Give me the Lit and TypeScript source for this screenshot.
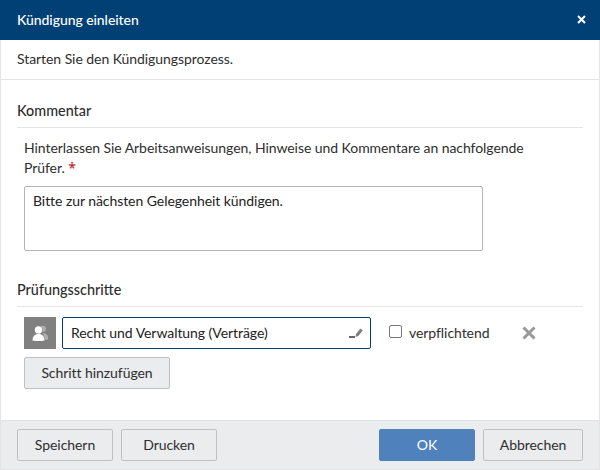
import { LitElement, html, css } from "lit";
import { customElement } from "lit/decorators.js";

@customElement("app-root")
export class AppRoot extends LitElement {
  static styles = css`
    :host { display: block; width: 600px; height: 470px; font-family: "Lato", sans-serif; font-size: 14px; letter-spacing: -0.06px; color: #2e2e2e; background: #fff; overflow: hidden; }
    * { box-sizing: border-box; }
    .dialog { width: 600px; height: 470px; display: flex; flex-direction: column; border-left: 1px solid #e4e4e4; border-right: 1px solid #e4e4e4; border-bottom: 1px solid #e4e4e4; }
    .head { height: 40px; margin: 0 -1px; background: #004074; color: #fff; display: flex; align-items: center; justify-content: space-between; padding: 0 14px 1px 17px; font-weight: 500; flex: none; }
    .close { width: 9px; height: 9px; display: block; }
    .intro { height: 40px; display: flex; align-items: center; padding: 0 16px 2px; border-bottom: 1px solid #e4e4e4; flex: none; }
    .body { flex: 1; padding: 0 16px; display: flex; flex-direction: column; }
    .section { height: 30px; margin-top: 18px; font-weight: 500; font-size: 14.4px; letter-spacing: 0; border-bottom: 1px solid #e4e4e4; display: flex; align-items: center; padding-bottom: 4px; }
    .hint { margin: 10px 7px 0; line-height: 20px; width: 510px; }
    .req { color: #c0272d; font-family: "Noto Sans", sans-serif; font-weight: 500; line-height: 1; }
    .ta { margin: 8px 0 0 7px; width: 459px; height: 65px; border: 1px solid #b4b4b4; border-radius: 2px; padding: 5px 8px; line-height: 18px; color: #222; }
    .section.two { margin-top: 26px; }
    .row { display: flex; align-items: center; margin: 10px 0 0 7px; height: 32px; }
    .avatar { width: 32px; height: 32px; background: #808080; display: flex; align-items: center; justify-content: center; flex: none; }
    .input { width: 309px; height: 32px; margin-left: 6px; border: 1px solid #004074; border-radius: 2px; display: flex; align-items: center; justify-content: space-between; padding: 0 7px 0 8px; color: #222; }
    .input span { padding-bottom: 2px; }
    .check { width: 13px; height: 13px; border: 1px solid #777; border-radius: 2px; margin: 0 0 4px 18px; flex: none; }
    .label { margin-left: 7px; padding-bottom: 1px; }
    .x { margin-left: 33px; width: 14px; height: 14px; display: block; }
    .btn { height: 32px; display: flex; align-items: center; justify-content: center; padding-bottom: 2px; background: #ebecee; border: 1px solid #c0c0c0; border-radius: 2px; flex: none; }
    .add { width: 146px; margin: 8px 0 0 7px; }
    .foot { height: 49px; background: #ebecee; border-top: 1px solid #e0e0e0; flex: none; display: flex; align-items: center; padding: 0 16px; gap: 8px; }
    .w96 { width: 96px; }
    .ok { width: 96px; margin-left: auto; background: #4f81bd; border-color: #4f81bd; color: #fff; }
    .cancel { width: 100px; }
  `;
  render() {
    return html`<div class="dialog">
      <div class="head"><span>Kündigung einleiten</span>
        <svg class="close" viewBox="0 0 9 9"><path d="M1 1l7 7M8 1l-7 7" stroke="#fff" stroke-width="2"/></svg></div>
      <div class="intro">Starten Sie den Kündigungsprozess.</div>
      <div class="body">
        <div class="section">Kommentar</div>
        <div class="hint">Hinterlassen Sie Arbeitsanweisungen, Hinweise und Kommentare an nachfolgende Prüfer. <span class="req">*</span></div>
        <div class="ta">Bitte zur nächsten Gelegenheit kündigen.</div>
        <div class="section two">Prüfungsschritte</div>
        <div class="row">
          <div class="avatar"><svg width="16" height="16" viewBox="0 0 16 16"><circle cx="11" cy="3.800" r="3" fill="#b0b0b0"/><path d="M11 8c3 0 5 2 5.500 6.500l-3 .5z" fill="#b0b0b0"/><circle cx="6.500" cy="5" r="4.200" fill="#808080"/><circle cx="6.500" cy="5" r="3.700" fill="#fff"/><path d="M.5 15.500c0-4 2-6.500 6-6.500s6 2.500 6 6.500c-3 .8-9 .8-12 0z" fill="#fff"/></svg></div>
          <div class="input"><span>Recht und Verwaltung (Verträge)</span>
            <svg width="14" height="14" viewBox="0 0 14 14"><path d="M0 10h6v2H0z" fill="#666"/><path d="M6.500 11l.5-3 4.500-5.500 2.300 2L9.300 10z" fill="#808080"/></svg></div>
          <div class="check"></div><div class="label">verpflichtend</div>
          <svg class="x" viewBox="0 0 14 14"><path d="M1.500 1.500l11 11M12.500 1.500l-11 11" stroke="#999" stroke-width="3"/></svg>
        </div>
        <div class="btn add">Schritt hinzufügen</div>
      </div>
      <div class="foot">
        <div class="btn w96">Speichern</div><div class="btn w96">Drucken</div>
        <div class="btn ok">OK</div><div class="btn cancel">Abbrechen</div>
      </div>
    </div>`;
  }
}
